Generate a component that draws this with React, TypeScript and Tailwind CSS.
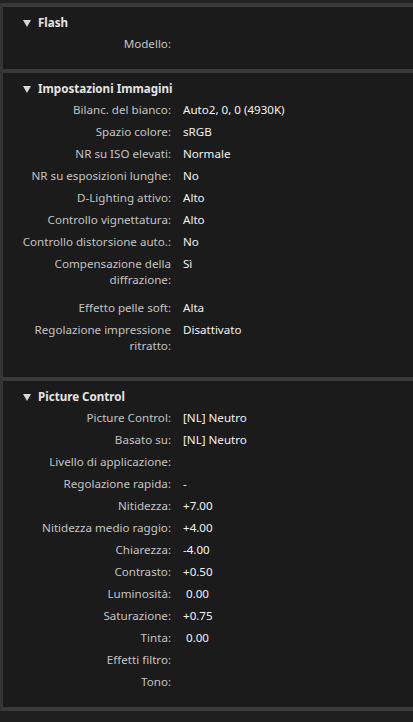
import React from "react";

type Row = { label: string; value?: string; multi?: boolean; indent?: boolean };

const sections: { title: string; rows: Row[] }[] = [
  { title: "Flash", rows: [{ label: "Modello:" }] },
  {
    title: "Impostazioni Immagini",
    rows: [
      { label: "Bilanc. del bianco:", value: "Auto2, 0, 0 (4930K)" },
      { label: "Spazio colore:", value: "sRGB" },
      { label: "NR su ISO elevati:", value: "Normale" },
      { label: "NR su esposizioni lunghe:", value: "No" },
      { label: "D-Lighting attivo:", value: "Alto" },
      { label: "Controllo vignettatura:", value: "Alto" },
      { label: "Controllo distorsione auto.:", value: "No" },
      { label: "Compensazione della diffrazione:", value: "Sì", multi: true },
      { label: "Effetto pelle soft:", value: "Alta" },
      { label: "Regolazione impressione ritratto:", value: "Disattivato", multi: true },
    ],
  },
  {
    title: "Picture Control",
    rows: [
      { label: "Picture Control:", value: "[NL] Neutro" },
      { label: "Basato su:", value: "[NL] Neutro" },
      { label: "Livello di applicazione:" },
      { label: "Regolazione rapida:", value: "-" },
      { label: "Nitidezza:", value: "+7.00" },
      { label: "Nitidezza medio raggio:", value: "+4.00" },
      { label: "Chiarezza:", value: "-4.00" },
      { label: "Contrasto:", value: "+0.50" },
      { label: "Luminosità:", value: "0.00", indent: true },
      { label: "Saturazione:", value: "+0.75" },
      { label: "Tinta:", value: "0.00", indent: true },
      { label: "Effetti filtro:" },
      { label: "Tono:" },
    ],
  },
];

function Section({ title, rows }: { title: string; rows: Row[] }) {
  return (
    <div className="bg-[#1b1b1b] pt-[8px] pb-[17px]">
      <div className="flex items-center h-[16px] pl-[20px]">
        <svg width="8" height="7" viewBox="0 0 8 7" className="mr-[7px]">
          <polygon points="0,0 8,0 4,7" fill="#d8d8d8" />
        </svg>
        <span className="font-bold text-[#e4e4e4]">{title}</span>
      </div>
      <div className="mt-[5px] flex flex-col gap-[6px]">
        {rows.map((r, i) => (
          <div key={i} className={"flex " + (r.multi ? "mb-[6px]" : "")}>
            <div className="w-[168px] pl-[16px] text-right text-[#c4c4c4] leading-[16px]">
              {r.multi ? (
                <span className="inline-block w-[146px]">{r.label}</span>
              ) : (
                r.label
              )}
            </div>
            <div
              className={
                "ml-[12px] text-[#f2f2f2] leading-[16px] " + (r.indent ? "pl-[3px]" : "")
              }
            >
              {r.value ?? ""}
            </div>
          </div>
        ))}
      </div>
    </div>
  );
}

export default function App() {
  return (
    <div
      className="w-[413px] h-[722px] overflow-hidden bg-[#1e1e1e] text-[11.6px]"
      style={{ fontFamily: '"Noto Sans", "Open Sans", sans-serif' }}
    >
      <div className="h-[3px] bg-[#222222]" />
      <div className="flex">
        <div className="w-[3px] bg-[#353535]" />
        <div className="flex-1 flex flex-col">
          <div className="h-[4px] bg-[#3a3a3a]" />
          <Section {...sections[0]} />
          <div className="h-[4px] bg-[#3a3a3a]" />
          <Section {...sections[1]} />
          <div className="h-[4px] bg-[#3a3a3a]" />
          <Section {...sections[2]} />
          <div className="h-[4px] bg-[#3a3a3a]" />
        </div>
      </div>
    </div>
  );
}
